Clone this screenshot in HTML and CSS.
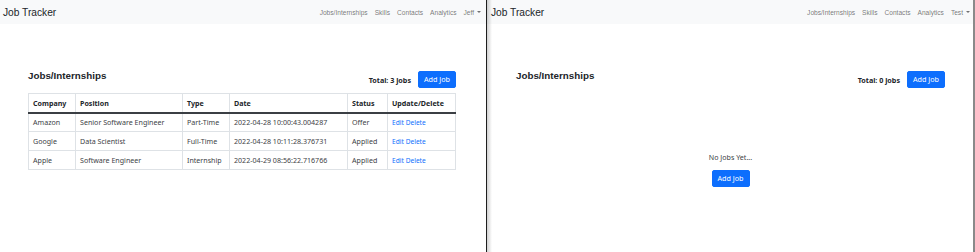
FILE: index.html
```html
<!DOCTYPE html>
<html lang="en">
<head>
<meta charset="utf-8">
<title>Job Tracker</title>
<link rel="stylesheet" href="styles.css">
</head>
<body>
<div class="screens">
  <section class="pane pane-left">
    <nav class="navbar">
      <span class="brand">Job Tracker</span>
      <ul class="nav">
        <li>Jobs/Internships</li>
        <li>Skills</li>
        <li>Contacts</li>
        <li>Analytics</li>
        <li class="dropdown">Jeff<span class="caret"></span></li>
      </ul>
    </nav>
    <main class="content">
      <div class="head-row">
        <h5 class="title">Jobs/Internships</h5>
        <div class="actions">
          <span class="total">Total: 3 jobs</span>
          <button class="btn">Add Job</button>
        </div>
      </div>
      <table class="jobs">
        <colgroup>
          <col class="c-company"><col class="c-position"><col class="c-type"><col class="c-date"><col class="c-status"><col class="c-actions">
        </colgroup>
        <thead>
          <tr><th>Company</th><th>Position</th><th>Type</th><th>Date</th><th>Status</th><th>Update/Delete</th></tr>
        </thead>
        <tbody>
          <tr><td>Amazon</td><td>Senior Software Engineer</td><td>Part-Time</td><td>2022-04-28 10:00:43.004287</td><td>Offer</td><td><a>Edit</a> <a>Delete</a></td></tr>
          <tr><td>Google</td><td>Data Scientist</td><td>Full-Time</td><td>2022-04-28 10:11:28.376731</td><td>Applied</td><td><a>Edit</a> <a>Delete</a></td></tr>
          <tr><td>Apple</td><td>Software Engineer</td><td>Internship</td><td>2022-04-29 08:56:22.716766</td><td>Applied</td><td><a>Edit</a> <a>Delete</a></td></tr>
        </tbody>
      </table>
    </main>
  </section>
  <div class="divider"></div>
  <section class="pane pane-right">
    <nav class="navbar">
      <span class="brand">Job Tracker</span>
      <ul class="nav">
        <li>Jobs/Internships</li>
        <li>Skills</li>
        <li>Contacts</li>
        <li>Analytics</li>
        <li class="dropdown">Test<span class="caret"></span></li>
      </ul>
    </nav>
    <main class="content">
      <div class="head-row">
        <h5 class="title">Jobs/Internships</h5>
        <div class="actions">
          <span class="total">Total: 0 jobs</span>
          <button class="btn">Add Job</button>
        </div>
      </div>
      <div class="empty">
        <p class="empty-text">No Jobs Yet...</p>
        <button class="btn">Add Job</button>
      </div>
    </main>
  </section>
</div>
</body>
</html>
```
FILE: styles.css
```css
* { box-sizing: border-box; }
html, body { margin: 0; padding: 0; background: #fff; }
body { width: 975px; height: 252px; overflow: hidden; font-family: "Noto Sans", "Open Sans", sans-serif; color: #212529; }

.screens { display: flex; height: 252px; }

.pane { position: relative; width: 486px; height: 252px; background: #fff; display: flex; flex-direction: column; }
.pane-right { border-right: 2px solid #8a8a8a; width: 488px; }
.pane-right::before {
  content: ""; position: absolute; left: 0; top: 0; bottom: 0; width: 5px;
  background: linear-gradient(to right, rgba(0,0,0,0.18), rgba(0,0,0,0));
  pointer-events: none;
}
.divider { width: 1px; background: #1e1e1e; }

.navbar { height: 24px; background: #f8f9fa; display: flex; align-items: center; justify-content: space-between; padding: 0 5px 0 3px; flex: none; }
.pane-right .navbar { padding: 0 3px 0 4px; }
.brand { font-family: "Liberation Sans", Arial, sans-serif; font-size: 10.2px; color: #212529; }
.nav { list-style: none; margin: 0; padding: 0; display: flex; gap: 7px; font-family: "Liberation Sans", Arial, sans-serif; font-size: 6.6px; color: rgba(0,0,0,0.55); }
.dropdown { display: flex; align-items: center; }
.caret { display: inline-block; margin-left: 3px; border-top: 2px solid rgba(0,0,0,0.55); border-left: 2px solid transparent; border-right: 2px solid transparent; }

.content { padding: 46px 30px 0 28px; flex: 1; }
.pane-right .content { padding: 46px 28px 0 29px; }

.head-row { display: flex; justify-content: space-between; align-items: flex-start; }
.title { margin: 0; font-family: "Liberation Sans", Arial, sans-serif; font-size: 9.8px; line-height: 12px; font-weight: 700; color: #212529; }
.actions { display: flex; align-items: center; gap: 7px; margin-top: 1px; }
.total { font-size: 7.2px; font-weight: 700; color: #212529; }
.btn { font-family: "Noto Sans", "Open Sans", sans-serif; font-size: 7.2px; color: #fff; background: #0d6efd; border: 1px solid #0d6efd; border-radius: 2px; height: 17px; width: 38px; padding: 0; line-height: 1; cursor: pointer; }

.jobs { width: 100%; margin-top: 5px; border-collapse: collapse; table-layout: fixed; font-size: 7.1px; border: 1px solid #dee2e6; }
.c-company { width: 47px; }
.c-position { width: 107px; }
.c-type { width: 47px; }
.c-date { width: 118px; }
.c-status { width: 40px; }
.c-actions { width: auto; }
.jobs th, .jobs td { height: 19px; padding: 0 4px; text-align: left; white-space: nowrap; overflow: hidden; border: 1px solid #dee2e6; vertical-align: middle; }
.jobs th { font-weight: 700; color: #212529; }
.jobs thead th { border-bottom: 2px solid #3b3f44; height: 19px; }
.jobs td { color: #3d4246; }
.jobs a { color: #0d6efd; font-size: 6.6px; }

.empty { display: flex; flex-direction: column; align-items: center; margin-top: 64px; }
.empty-text { margin: 0 0 8px; font-size: 7.1px; line-height: 10px; color: #3d4246; }
```
